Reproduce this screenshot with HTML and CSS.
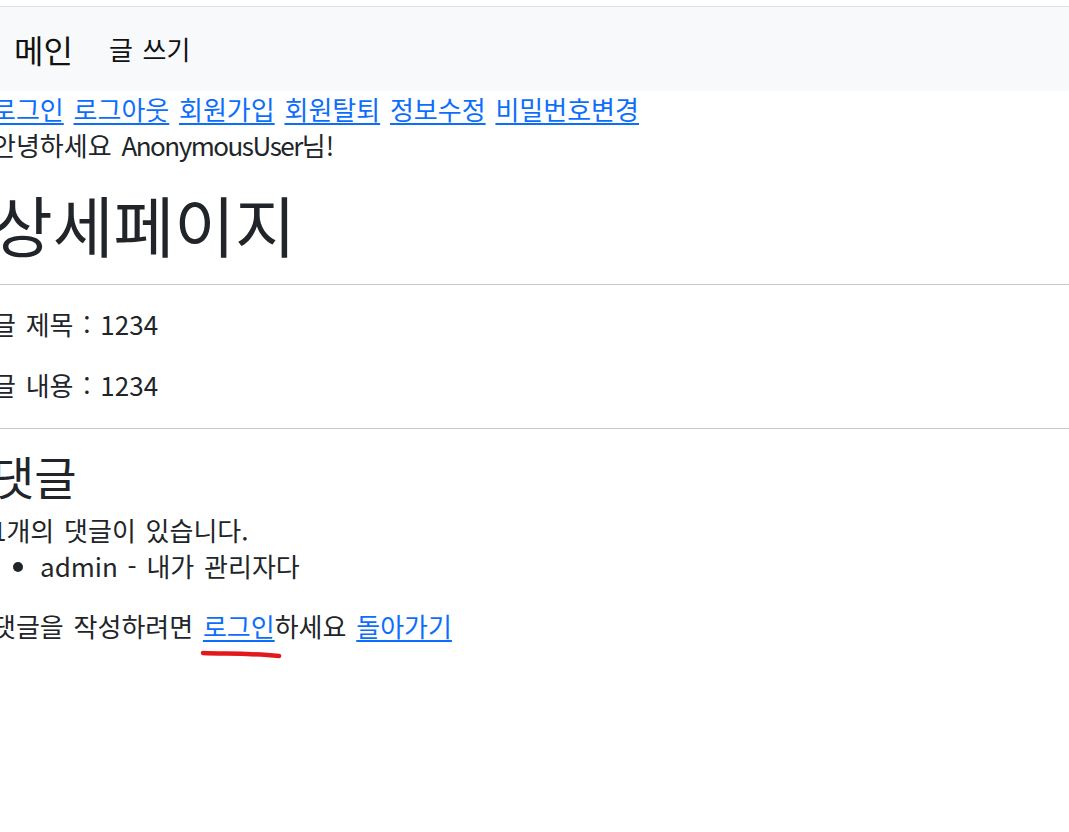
FILE: index.html
```html
<!DOCTYPE html>
<html lang="ko">
<head>
<meta charset="utf-8">
<title>상세페이지</title>
<link rel="stylesheet" href="styles.css">
</head>
<body>
<nav class="navbar">
  <div class="nav-inner">
    <a class="brand" href="#">메인</a>
    <a class="nav-link" href="#">글 쓰기</a>
  </div>
</nav>
<div class="page">
  <div class="auth-links"><a href="#">로그인</a> <a href="#">로그아웃</a> <a href="#">회원가입</a> <a href="#">회원탈퇴</a> <a href="#">정보수정</a> <a href="#">비밀번호변경</a></div>
  <div class="greeting">안녕하세요 <span class="user">AnonymousUser</span>님!</div>
  <h1 class="title">상세페이지</h1>
  <hr class="rule">
  <p class="field">글 제목 : 1234</p>
  <p class="field">글 내용 : 1234</p>
  <hr class="rule">
  <h3 class="comments-title">댓글</h3>
  <div class="count">1개의 댓글이 있습니다.</div>
  <ul class="comment-list">
    <li>admin - 내가 관리자다</li>
  </ul>
  <p class="field">댓글을 작성하려면 <span class="mark"><a href="#">로그인</a><svg class="scribble" width="84" height="14" viewBox="0 0 84 14"><path d="M4 5 C 25 6, 50 5, 80 8" fill="none" stroke="#e3181c" stroke-width="4.5" stroke-linecap="round"/></svg></span>하세요 <a href="#">돌아가기</a></p>
</div>
</body>
</html>
```
FILE: styles.css
```css
html, body {
  margin: 0;
  padding: 0;
}
body {
  padding-top: 6px;
  font-family: "Noto Sans CJK KR", sans-serif;
  font-size: 26px;
  line-height: 36px;
  word-spacing: 2.5px;
  color: #212529;
  background: #fff;
}
a {
  color: #0d6efd;
  text-decoration: underline;
  text-underline-offset: 3px;
}
.navbar {
  border-top: 1px solid #dee2e6;
  background: #f8f9fa;
  padding: 12px 0;
}
.nav-inner {
  display: flex;
  align-items: center;
  padding-left: 14px;
}
.brand {
  font-size: 32px;
  line-height: 45px;
  padding: 7.5px 0;
  margin-right: 24px;
  color: #111;
  text-decoration: none;
}
.nav-link {
  font-size: 26px;
  line-height: 36px;
  padding: 12px;
  color: #111;
  text-decoration: none;
}
.page {
  margin-left: -8px;
}
.user {
  letter-spacing: -1.5px;
}
.title {
  font-size: 66px;
  line-height: 72px;
  font-weight: 400;
  margin: 24px 0 0;
}
.rule {
  border: 0;
  border-top: 1px solid #c8c9ca;
  margin: 25px 0 21px;
}
.field {
  margin: 0 0 25px;
}
.comments-title {
  font-size: 46px;
  line-height: 50px;
  font-weight: 400;
  margin: 0 0 12px;
}
.comment-list {
  margin: 0 0 24px;
  padding-left: 48px;
}
.mark {
  position: relative;
}
.scribble {
  position: absolute;
  left: -4px;
  top: 41px;
}
```
